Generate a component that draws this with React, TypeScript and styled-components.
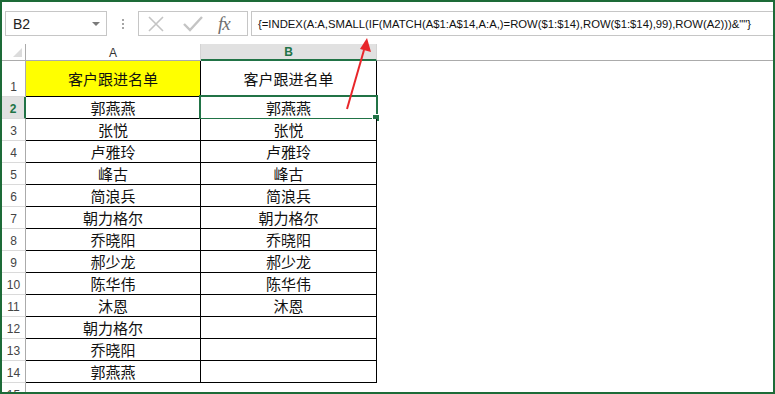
import styled, { createGlobalStyle } from 'styled-components';

const GlobalStyle = createGlobalStyle`
    * { box-sizing: border-box; }
    html, body { margin: 0; padding: 0; background: #ffffff; }
    body { font-family: "Liberation Sans", Arial, sans-serif; }
`;

const Frame = styled.div`
    position: relative;
    width: 775px;
    height: 394px;
    border: 2px solid #1d6b38;
    overflow: hidden;
    background: #ffffff;
`;

// formula bar
const FormulaBar = styled.div`
    display: flex;
    align-items: stretch;
    height: 25px;
    margin-top: 9px;
    padding-left: 3px;
`;
const NameBox = styled.div`
    width: 102px;
    border: 1px solid #c6c6c6;
    display: flex;
    align-items: center;
    justify-content: space-between;
    padding: 0 6px 0 7px;
    font-size: 14px;
    color: #222222;
`;
const Caret = styled.span`
    width: 0;
    height: 0;
    border-left: 4px solid transparent;
    border-right: 4px solid transparent;
    border-top: 4px solid #7a7a7a;
`;
const Dots = styled.div`
    width: 31px;
    display: flex;
    flex-direction: column;
    align-items: center;
    justify-content: center;
    gap: 2px;
    span {
        width: 2px;
        height: 2px;
        background: #a6a6a6;
    }
`;
const FuncBox = styled.div`
    width: 110px;
    border: 1px solid #c6c6c6;
    display: flex;
    align-items: center;
    padding-left: 7px;
    gap: 16px;
`;
const Fx = styled.span`
    font-family: "Liberation Serif", "Times New Roman", serif;
    font-style: italic;
    font-size: 19px;
    color: #707070;
    line-height: 1;
    margin-left: -2px;
    letter-spacing: -1px;
`;
const FormulaInput = styled.div`
    flex: 1;
    margin-left: 3px;
    border: 1px solid #c6c6c6;
    border-right: 0;
    display: flex;
    align-items: center;
    padding-left: 6px;
    font-size: 11.3px;
    color: #111111;
    white-space: nowrap;
    overflow: hidden;
`;

// sheet
const Sheet = styled.div`
    margin-top: 8px;
    display: flex;
    flex-direction: column;
`;
const Row = styled.div<{ $h: number }>`
    display: flex;
    height: ${(p) => p.$h}px;
    flex-shrink: 0;
`;
const Corner = styled.div`
    position: relative;
    width: 24px;
    border-right: 1px solid #ababab;
    border-bottom: 1px solid #ababab;
    &:after {
        content: '';
        position: absolute;
        right: 3px;
        bottom: 3px;
        border-left: 9px solid transparent;
        border-bottom: 9px solid #dcdcdc;
    }
`;
const ColHead = styled.div<{ $w: number; $sel?: boolean }>`
    width: ${(p) => p.$w}px;
    background: ${(p) => (p.$sel ? '#e1e1e1' : '#ffffff')};
    border-right: 1px solid #d4d4d4;
    border-bottom: ${(p) => (p.$sel ? '2px solid #217346' : '1px solid #ababab')};
    display: flex;
    align-items: center;
    justify-content: center;
    font-size: 12px;
    font-weight: ${(p) => (p.$sel ? 'bold' : 'normal')};
    color: ${(p) => (p.$sel ? '#217346' : '#333333')};
    padding-top: 1px;
`;
const HeadFill = styled.div`
    flex: 1;
    border-bottom: 1px solid #ababab;
`;
const RowHead = styled.div<{ $sel?: boolean; $bottom?: boolean }>`
    width: 24px;
    background: ${(p) => (p.$sel ? '#e1e1e1' : '#ffffff')};
    border-right: ${(p) => (p.$sel ? '2px solid #217346' : '1px solid #ababab')};
    border-bottom: 1px solid #dadada;
    display: flex;
    align-items: ${(p) => (p.$bottom ? 'flex-end' : 'center')};
    justify-content: center;
    padding-bottom: ${(p) => (p.$bottom ? '2px' : '0')};
    padding-top: 2px;
    font-size: 12px;
    font-weight: ${(p) => (p.$sel ? 'bold' : 'normal')};
    color: ${(p) => (p.$sel ? '#217346' : '#444444')};
`;
const Cell = styled.div<{ $w: number; $bg?: string; $sel?: boolean }>`
    position: relative;
    width: ${(p) => p.$w}px;
    background: ${(p) => p.$bg || '#ffffff'};
    border-right: 1px solid #000000;
    border-bottom: 1px solid #000000;
    display: flex;
    align-items: center;
    justify-content: center;
    font-family: "Noto Sans CJK SC", "Liberation Sans", sans-serif;
    font-size: 15px;
    color: #111111;
    ${(p) =>
        p.$sel &&
        `
        &:before {
            content: '';
            position: absolute;
            left: -2px;
            top: -2px;
            right: -2px;
            bottom: -2px;
            border: 2px solid #217346;
            pointer-events: none;
        }
        &:after {
            content: '';
            position: absolute;
            right: -4px;
            bottom: -4px;
            width: 6px;
            height: 6px;
            background: #217346;
            border: 1px solid #ffffff;
        }
    `}
`;
const Blank = styled.div`
    flex: 1;
`;

const Arrow = styled.svg`
    position: absolute;
    left: 0;
    top: 0;
    pointer-events: none;
`;

const colA = ['郭燕燕', '张悦', '卢雅玲', '峰古', '简浪兵', '朝力格尔', '乔晓阳', '郝少龙', '陈华伟', '沐恩', '朝力格尔', '乔晓阳', '郭燕燕'];
const colB = ['郭燕燕', '张悦', '卢雅玲', '峰古', '简浪兵', '朝力格尔', '乔晓阳', '郝少龙', '陈华伟', '沐恩', '', '', ''];

const formula = '{=INDEX(A:A,SMALL(IF(MATCH(A$1:A$14,A:A,)=ROW($1:$14),ROW($1:$14),99),ROW(A2)))&""}';

const App = () => {
    return (
        <>
            <GlobalStyle />
            <Frame>
                <FormulaBar>
                    <NameBox>
                        B2
                        <Caret />
                    </NameBox>
                    <Dots>
                        <span />
                        <span />
                        <span />
                    </Dots>
                    <FuncBox>
                        <svg width="20" height="20" viewBox="0 0 20 20">
                            <path d="M3 3 L17 17 M17 3 L3 17" stroke="#c4c4c4" strokeWidth="1.6" fill="none" />
                        </svg>
                        <svg width="22" height="20" viewBox="0 0 22 20">
                            <path d="M2 10 L8 16 L20 3" stroke="#c4c4c4" strokeWidth="2.4" fill="none" />
                        </svg>
                        <Fx>fx</Fx>
                    </FuncBox>
                    <FormulaInput>{formula}</FormulaInput>
                </FormulaBar>
                <Sheet>
                    <Row $h={17}>
                        <Corner />
                        <ColHead $w={175}>A</ColHead>
                        <ColHead $w={176} $sel>B</ColHead>
                        <HeadFill />
                    </Row>
                    <Row $h={36}>
                        <RowHead $bottom>1</RowHead>
                        <Cell $w={175} $bg="#ffff00">客户跟进名单</Cell>
                        <Cell $w={176}>客户跟进名单</Cell>
                        <Blank />
                    </Row>
                    {colA.map((name, i) => (
                        <Row $h={22} key={i}>
                            <RowHead $sel={i === 0}>{i + 2}</RowHead>
                            <Cell $w={175}>{name}</Cell>
                            <Cell $w={176} $sel={i === 0}>{colB[i]}</Cell>
                            <Blank />
                        </Row>
                    ))}
                    <Row $h={22}>
                        <RowHead>15</RowHead>
                        <Blank />
                    </Row>
                </Sheet>
                <Arrow width="775" height="394" viewBox="0 0 775 394">
                    <path d="M345 107 L362 48" stroke="#e8262a" strokeWidth="2" fill="none" />
                    <path d="M365 36 L369 50 L358 47 Z" fill="#e8262a" />
                </Arrow>
            </Frame>
        </>
    );
};

export default App;
